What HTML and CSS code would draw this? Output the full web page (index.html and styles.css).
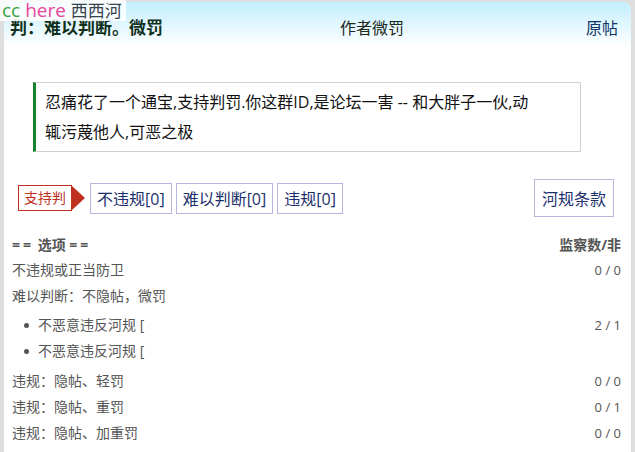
FILE: index.html
```html
<!DOCTYPE html>
<html lang="zh">
<head>
    <meta charset="UTF-8">
    <meta name="viewport" content="width=device-width, initial-scale=1.0">
    <title>判：难以判断。微罚</title>
    <link rel="stylesheet" href="styles.css">
</head>
<body>

<div class="site-tag">
    <span class="cc">cc</span> <span class="here">here</span> <span class="site">西西河</span>
</div>

<div class="card">
    <header class="topbar">
        <span class="title">判：难以判断。微罚</span>
        <span class="author">作者微罚</span>
        <a class="origin" href="#">原帖</a>
    </header>

    <blockquote class="quote">
        忍痛花了一个通宝,支持判罚.你这群ID,是论坛一害 -- 和大胖子一伙,动辄污蔑他人,可恶之极
    </blockquote>

    <div class="vote-bar">
        <span class="verdict">支持判</span>
        <button class="vote">不违规[0]</button>
        <button class="vote">难以判断[0]</button>
        <button class="vote">违规[0]</button>
        <button class="rules">河规条款</button>
    </div>

    <div class="options">
        <div class="row head">
            <span><span class="eq">==</span> 选项 <span class="eq">==</span></span>
            <span>监察数/非</span>
        </div>
        <div class="row">
            <span>不违规或正当防卫</span>
            <span class="num">0 / 0</span>
        </div>
        <div class="row">
            <span>难以判断：不隐帖，微罚</span>
        </div>
        <div class="row bullet first">
            <span>不恶意违反河规 [</span>
            <span class="num">2 / 1</span>
        </div>
        <div class="row bullet">
            <span>不恶意违反河规 [</span>
        </div>
        <div class="row gap">
            <span>违规：隐帖、轻罚</span>
            <span class="num">0 / 0</span>
        </div>
        <div class="row">
            <span>违规：隐帖、重罚</span>
            <span class="num">0 / 1</span>
        </div>
        <div class="row">
            <span>违规：隐帖、加重罚</span>
            <span class="num">0 / 0</span>
        </div>
    </div>
</div>

</body>
</html>
```

FILE: styles.css
```css
body {
    margin: 0;
    padding: 2px 4px 0 4px;
    background-color: #dedede;
    font-family: "Open Sans", "Noto Sans CJK SC", sans-serif;
}
.site-tag {
    position: absolute;
    top: 0;
    left: 0;
    padding: 0 4px 0 2px;
    line-height: 21px;
    font-size: 19px;
    background-color: rgba(255, 255, 255, 0.85);
    z-index: 2;
}
.site-tag .cc {
    color: #3aa346;
}
.site-tag .here {
    color: #e8449a;
}
.site-tag .site {
    color: #36434d;
    font-size: 17px;
}
.card {
    background-color: white;
    border-radius: 8px 8px 0 0;
    height: 460px;
    overflow: hidden;
}
.topbar {
    display: flex;
    align-items: center;
    height: 45px;
    padding: 6px 13px 0 6px;
    box-sizing: border-box;
    background: linear-gradient(#c3eefe, #ffffff);
    font-size: 16px;
    line-height: 20px;
}
.title {
    font-weight: bold;
    font-size: 17px;
    color: #10301c;
}
.author {
    margin-left: auto;
    color: #1c2a1c;
}
.origin {
    margin-left: 182px;
    color: #0f3468;
    text-decoration: none;
}
.quote {
    margin: 35px 50px 0 29px;
    padding: 4px 45px 4px 9px;
    border: 1px solid #d0d0d0;
    border-left: 3px solid #16802a;
    font-size: 16px;
    line-height: 30px;
    color: #111;
}
.vote-bar {
    display: flex;
    align-items: center;
    margin: 27px 17px 0 14px;
}
.verdict {
    position: relative;
    height: 24px;
    line-height: 24px;
    padding: 0 5px;
    border: 1px solid #c0301e;
    color: #c0301e;
    font-size: 14px;
    margin-right: 18px;
}
.verdict::after {
    content: "";
    position: absolute;
    right: -14px;
    top: 0;
    border-top: 12px solid transparent;
    border-bottom: 12px solid transparent;
    border-left: 13px solid #c0301e;
}
.vote, .rules {
    font-family: inherit;
    font-size: 16px;
    color: #1c2f6c;
    background: white;
    border: 1px solid #b6b6de;
    padding: 0 6px;
    height: 31px;
    margin-right: 4px;
}
.rules {
    margin-left: auto;
    margin-right: 0;
    height: 38px;
    padding: 0 7px;
}
.options {
    margin: 16px 10px 0 8px;
    color: #555;
}
.row {
    display: flex;
    justify-content: space-between;
    align-items: center;
    height: 26px;
    line-height: 18px;
    font-size: 14px;
}
.row.head {
    font-weight: bold;
    height: 24px;
}
.row.head .eq {
    letter-spacing: 3px;
}
.row.bullet {
    padding-left: 26px;
    position: relative;
}
.row.bullet::before {
    content: "";
    position: absolute;
    left: 12px;
    top: 11px;
    width: 5px;
    height: 5px;
    border-radius: 50%;
    background-color: #555;
}
.row.first {
    margin-top: 3px;
}
.row.gap {
    margin-top: 4px;
}
.num {
    font-size: 13px;
}
```
